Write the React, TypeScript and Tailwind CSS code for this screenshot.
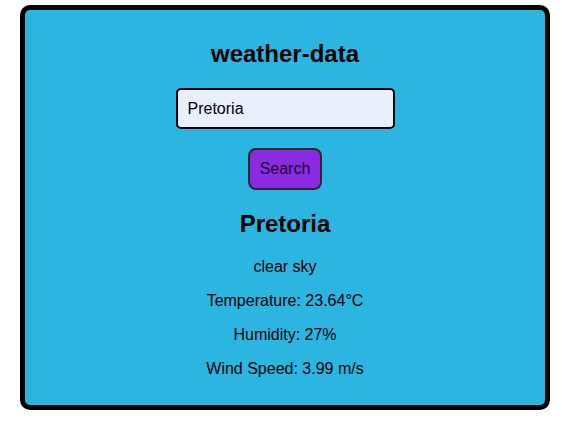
import React from "react";

export default function App() {
  return (
    <div className="w-[562px] h-[426px] bg-white" style={{ fontFamily: '"Liberation Sans", Arial, sans-serif' }}>
      <div className="ml-[20px] pt-[5px]">
        <div className="w-[530px] h-[405px] border-[5px] border-black rounded-[10px] bg-[#2bb5e0] flex flex-col items-center text-black">
          <h1 className="mt-[30px] text-[24px] leading-[27px] font-bold">weather-data</h1>
          <input
            readOnly
            value="Pretoria"
            className="mt-[21px] w-[219px] h-[41px] px-[10px] border-2 border-black rounded-[5px] bg-[#e8f0fe] text-[16px] text-black outline-none"
            style={{ fontFamily: '"Liberation Sans", Arial, sans-serif' }}
          />
          <button
            className="mt-[19px] w-[74px] h-[42px] border-2 border-[#2a2a2a] rounded-[8px] bg-[#8a2be2] text-[16px] text-[#1a0530]"
            style={{ fontFamily: '"Liberation Sans", Arial, sans-serif' }}
          >
            Search
          </button>
          <h2 className="mt-[20px] text-[24px] leading-[27px] font-bold">Pretoria</h2>
          <p className="mt-[21px] text-[16px] leading-[18px]">clear sky</p>
          <p className="mt-[16px] text-[16px] leading-[18px]">Temperature: 23.64°C</p>
          <p className="mt-[16px] text-[16px] leading-[18px]">Humidity: 27%</p>
          <p className="mt-[16px] text-[16px] leading-[18px]">Wind Speed: 3.99 m/s</p>
        </div>
      </div>
    </div>
  );
}
